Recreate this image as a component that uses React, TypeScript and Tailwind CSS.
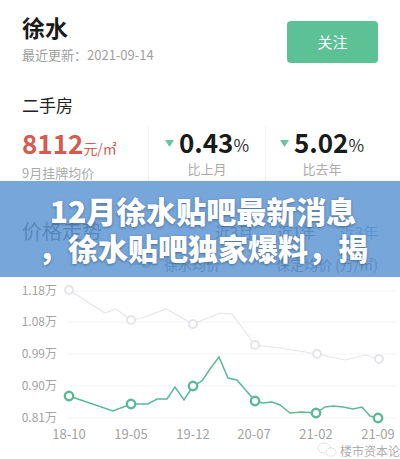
import React from 'react';

const font = { fontFamily: '"Noto Sans CJK SC", "Noto Sans", sans-serif' };

const grayPts: [number, number][] = [
  [69, 290], [105, 313], [116, 309], [131, 320], [142, 318], [166, 309], [193, 324],
  [220, 313], [232, 314], [255, 345], [280, 348], [317, 354], [345, 360], [365, 355], [379, 359],
];
const grayDots: [number, number][] = [[69, 290], [131, 320], [193, 324], [255, 345], [317, 354], [379, 359]];

const greenPts: [number, number][] = [
  [69, 396], [113, 411], [131, 404], [148, 404], [157, 399], [167, 399], [175, 387], [184, 400],
  [193, 386], [202, 381], [210, 369], [219, 357], [228, 378], [237, 380], [255, 401], [263, 403],
  [272, 402], [280, 405], [290, 413], [302, 412], [316, 413], [325, 407], [333, 406], [343, 407],
  [353, 409], [362, 407], [370, 416], [378, 418],
];
const greenDots: [number, number][] = [[69, 396], [131, 404], [193, 386], [255, 401], [316, 413], [378, 418]];

const yLabels = [
  { y: 291, t: '1.18万' },
  { y: 322, t: '1.08万' },
  { y: 354, t: '0.99万' },
  { y: 386, t: '0.90万' },
  { y: 418, t: '0.81万' },
];
const xLabels = [
  { x: 69, t: '18-10' },
  { x: 131, t: '19-05' },
  { x: 193, t: '19-12' },
  { x: 254, t: '20-07' },
  { x: 316, t: '21-02' },
  { x: 378, t: '21-09' },
];

const toPath = (pts: [number, number][]) => pts.map((p, i) => `${i ? 'L' : 'M'}${p[0]} ${p[1] - 280}`).join(' ');

const Stat: React.FC<{ value: string; label: string }> = ({ value, label }) => (
  <div className="flex flex-col items-center">
    <div className="flex items-center h-[30px]">
      <svg width="9" height="7" viewBox="0 0 9 7" className="mr-[5px] mt-[2px]">
        <path d="M0 0 H9 L4.5 7 Z" fill="#6cc3a0" />
      </svg>
      <span className="text-[26px] font-bold text-[#1a1a1a] leading-none">{value}</span>
      <span className="text-[17px] text-[#333] leading-none mt-[4px]">%</span>
    </div>
    <div className="text-[13px] text-[#aaa] mt-[5px] leading-none">{label}</div>
  </div>
);

export default function App() {
  return (
    <div className="relative w-[400px] h-[459px] bg-white overflow-hidden" style={font}>
      {/* header */}
      <div className="flex justify-between px-[22px] pt-[13px]">
        <div>
          <div className="text-[23px] font-bold text-[#1a1a1a] leading-[28px]">徐水</div>
          <div className="text-[13px] text-[#a0a0a0] mt-[7px] leading-none">最近更新：2021-09-14</div>
        </div>
        <button className="mt-[8px] w-[91px] h-[42px] rounded-[4px] bg-[#5cc195] text-white text-[15px]">
          关注
        </button>
      </div>

      <div className="px-[22px] mt-[33px] text-[17px] text-[#222] leading-none">二手房</div>

      {/* stats */}
      <div className="flex mt-[13px] h-[57px]">
        <div className="w-[148px] pl-[22px] pt-[4px]">
          <div className="flex items-baseline text-[#d65a4d] leading-none">
            <span className="text-[26px] font-bold">8112</span>
            <span className="text-[14px]">元/㎡</span>
          </div>
          <div className="text-[13px] text-[#aaa] mt-[10px] leading-none">9月挂牌均价</div>
        </div>
        <div className="w-[117px] border-l border-[#f2f2f2] flex justify-center pt-[1px]">
          <Stat value="0.43" label="比上月" />
        </div>
        <div className="w-[113px] border-l border-[#f2f2f2] flex justify-center pt-[1px]">
          <Stat value="5.02" label="比去年" />
        </div>
      </div>

      {/* trend header */}
      <div className="flex items-center px-[22px] mt-[36px] h-[24px]">
        <div className="text-[20px] text-[#333] flex-1 leading-none">价格走势</div>
        <div className="flex gap-[24px] text-[15px] leading-none">
          <span className="text-[#444]">近3月</span>
          <span className="text-[#444]">近1年</span>
          <span className="text-[#4b86c6]">近3年</span>
        </div>
      </div>

      {/* legend */}
      <div className="flex items-center justify-end pr-[22px] mt-[12px] h-[18px] text-[14px] text-[#555] leading-none">
        <svg width="24" height="10" viewBox="0 0 24 10" className="mr-[6px]">
          <line x1="0" y1="5" x2="24" y2="5" stroke="#5cb895" strokeWidth="1.5" />
          <circle cx="12" cy="5" r="3.2" fill="white" stroke="#5cb895" strokeWidth="1.8" />
        </svg>
        <span>徐水均价</span>
        <svg width="24" height="10" viewBox="0 0 24 10" className="ml-[26px] mr-[6px]">
          <line x1="0" y1="5" x2="24" y2="5" stroke="#e3e3e8" strokeWidth="1.5" />
          <circle cx="12" cy="5" r="3.2" fill="white" stroke="#e3e3e8" strokeWidth="1.8" />
        </svg>
        <span>保定均价 (万/㎡)</span>
      </div>

      {/* chart */}
      <svg width="400" height="179" viewBox="0 0 400 179" className="block mt-[7px]">
        {yLabels.map((l) => (
          <g key={l.t}>
            <line x1="68" y1={l.y - 280} x2="396" y2={l.y - 280} stroke="#f4f4f6" strokeWidth="1" />
            <text x="57" y={l.y - 280 + 4} textAnchor="end" fontSize="12" fill="#a3a3a3" style={font}>
              {l.t}
            </text>
          </g>
        ))}
        <path d={toPath(grayPts)} fill="none" stroke="#e6e6ea" strokeWidth="1.2" />
        {grayDots.map((p, i) => (
          <circle key={i} cx={p[0]} cy={p[1] - 280} r="4" fill="white" stroke="#e4e4ea" strokeWidth="2" />
        ))}
        <path d={toPath(greenPts)} fill="none" stroke="#5cb895" strokeWidth="1.5" />
        {greenDots.map((p, i) => (
          <circle key={i} cx={p[0]} cy={p[1] - 280} r="4.2" fill="white" stroke="#5cb895" strokeWidth="2.4" />
        ))}
        {xLabels.map((l) => (
          <text key={l.t} x={l.x} y={155 + 4} textAnchor="middle" fontSize="13" fill="#a3a3a3" style={font}>
            {l.t}
          </text>
        ))}
        {/* watermark */}
        <g opacity="0.8">
          <ellipse cx="324" cy="168" rx="6" ry="5" fill="white" stroke="#bbb" strokeWidth="0.8" strokeDasharray="1.5 1" />
          <ellipse cx="331" cy="172" rx="5" ry="4" fill="white" stroke="#bbb" strokeWidth="0.8" strokeDasharray="1.5 1" />
          <text x="340" y="176" fontSize="12" fill="#999" style={font}>
            楼市资本论
          </text>
        </g>
      </svg>

      {/* overlay banner */}
      <div className="absolute left-0 top-[181px] w-[400px] h-[96px] bg-[#5e96d3]/85 flex flex-col items-center justify-center">
        <div
          className="text-white text-[30px] font-black leading-[37px] text-center pl-[6px]"
          style={{ textShadow: '0 1px 3px rgba(0,0,0,0.35)' }}
        >
          <div>12月徐水贴吧最新消息</div>
          <div>，徐水贴吧独家爆料，揭</div>
        </div>
      </div>
    </div>
  );
}
